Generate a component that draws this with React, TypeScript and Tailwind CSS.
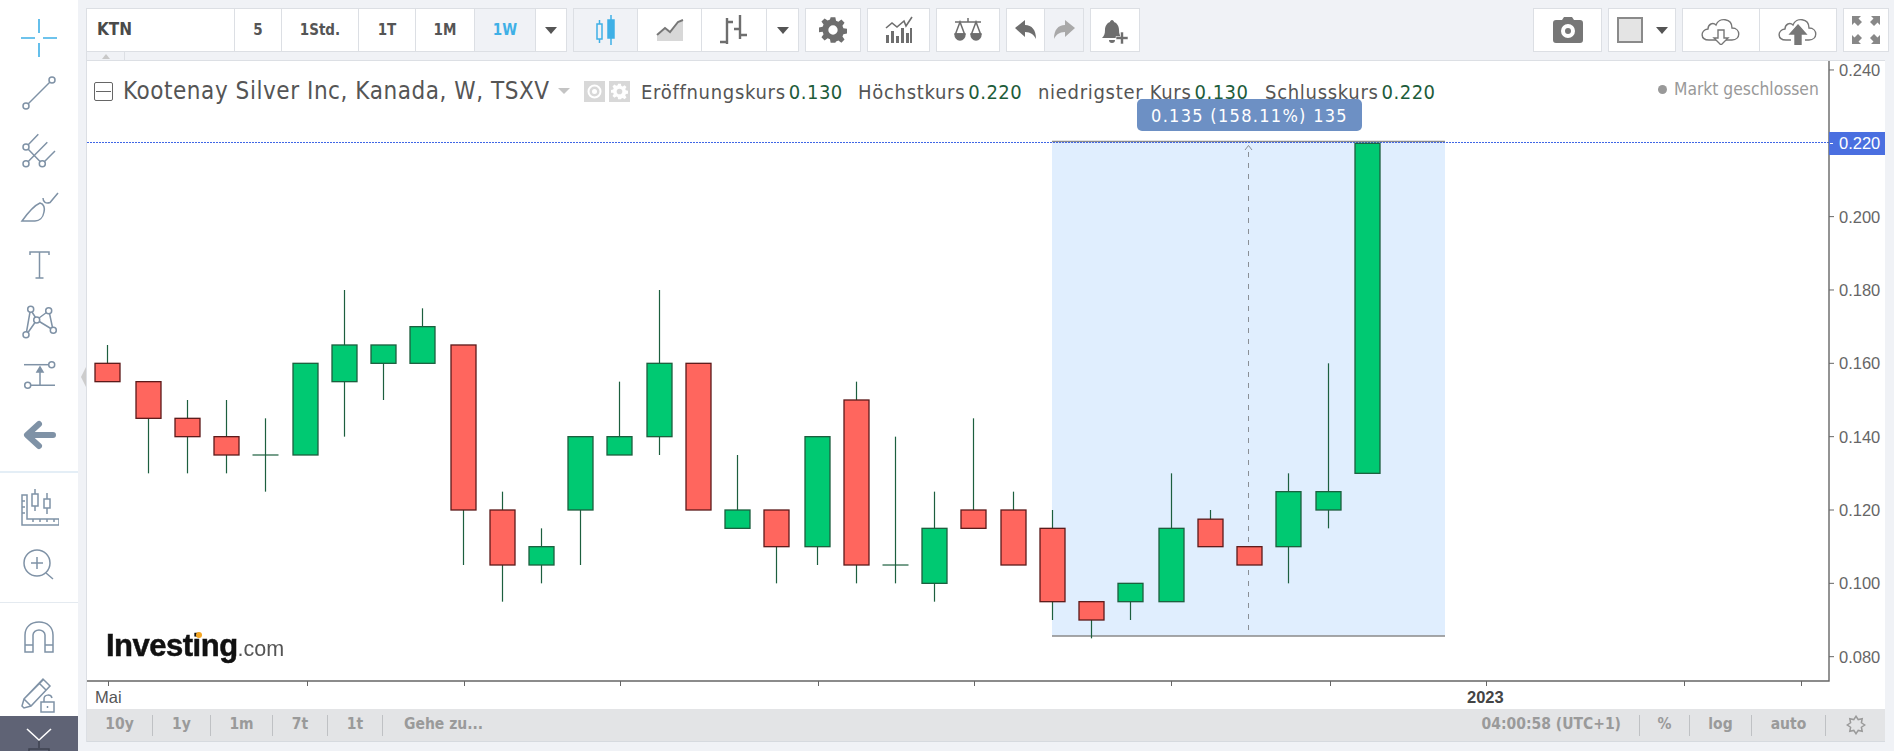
import type { ReactNode } from 'react';

const condensed = "font-['DejaVu_Sans_Condensed','DejaVu_Sans',sans-serif]";
const arial = "font-['Liberation_Sans',Arial,sans-serif]";

type Candle = [number, 'r' | 'g', number, number, number, number];

// x, colour, wick high, body top, body bottom, wick low
const candles: Candle[] = [
  [107, 'r', 0.165, 0.16, 0.155, 0.155],
  [148, 'r', 0.155, 0.155, 0.145, 0.13],
  [187, 'r', 0.15, 0.145, 0.14, 0.13],
  [226, 'r', 0.15, 0.14, 0.135, 0.13],
  [265, 'g', 0.145, 0.135, 0.135, 0.125],
  [305, 'g', 0.16, 0.16, 0.135, 0.135],
  [344, 'g', 0.18, 0.165, 0.155, 0.14],
  [383, 'g', 0.165, 0.165, 0.16, 0.15],
  [422, 'g', 0.175, 0.17, 0.16, 0.16],
  [463, 'r', 0.165, 0.165, 0.12, 0.105],
  [502, 'r', 0.125, 0.12, 0.105, 0.095],
  [541, 'g', 0.115, 0.11, 0.105, 0.1],
  [580, 'g', 0.14, 0.14, 0.12, 0.105],
  [619, 'g', 0.155, 0.14, 0.135, 0.135],
  [659, 'g', 0.18, 0.16, 0.14, 0.135],
  [698, 'r', 0.16, 0.16, 0.12, 0.12],
  [737, 'g', 0.135, 0.12, 0.115, 0.115],
  [776, 'r', 0.12, 0.12, 0.11, 0.1],
  [817, 'g', 0.14, 0.14, 0.11, 0.105],
  [856, 'r', 0.155, 0.15, 0.105, 0.1],
  [895, 'g', 0.14, 0.105, 0.105, 0.1],
  [934, 'g', 0.125, 0.115, 0.1, 0.095],
  [973, 'r', 0.145, 0.12, 0.115, 0.115],
  [1013, 'r', 0.125, 0.12, 0.105, 0.105],
  [1052, 'r', 0.12, 0.115, 0.095, 0.09],
  [1091, 'r', 0.095, 0.095, 0.09, 0.085],
  [1130, 'g', 0.1, 0.1, 0.095, 0.09],
  [1171, 'g', 0.13, 0.115, 0.095, 0.095],
  [1210, 'r', 0.12, 0.1175, 0.11, 0.11],
  [1249, 'r', 0.11, 0.11, 0.105, 0.105],
  [1288, 'g', 0.13, 0.125, 0.11, 0.1],
  [1328, 'g', 0.16, 0.125, 0.12, 0.115],
  [1367, 'g', 0.22, 0.22, 0.13, 0.13],
];

const yOf = (p: number) => 143.3 + (0.22 - p) * 3667;

const axisLabels = ['0.240', '0.200', '0.180', '0.160', '0.140', '0.120', '0.100', '0.080'];
const timeTicks = [108, 307, 464, 620, 818, 974, 1171, 1330, 1486, 1684, 1801];

// 8 pointed star for the settings button in the bottom bar
const starPoints = Array.from({ length: 16 }, (_, i) => {
  const r = i % 2 === 0 ? 10.5 : 7;
  const a = (i * Math.PI) / 8;
  return `${(12 + r * Math.sin(a)).toFixed(2)},${(12 - r * Math.cos(a)).toFixed(2)}`;
}).join(' ');

function Icon({ size = 40, children }: { size?: number; children: ReactNode }) {
  return (
    <svg width={size} height={size} viewBox="0 0 40 40" fill="none" stroke="#7f92a6" strokeWidth="1.5">
      {children}
    </svg>
  );
}

function Sidebar() {
  return (
    <div className="w-[78px] h-full bg-white flex flex-col items-center relative shrink-0">
      <div className="mt-[18px]">
        <Icon>
          <path d="M20 1v14M20 25v14M2 20h14M24 20h14" stroke="#3fb0e6" strokeWidth="1.6" />
        </Icon>
      </div>
      <div className="mt-[15px]">
        <Icon>
          <circle cx="33" cy="7" r="3" />
          <circle cx="7" cy="33" r="3" />
          <path d="M31 9L9 31" />
        </Icon>
      </div>
      <div className="mt-[18px]">
        <Icon>
          <circle cx="7" cy="16" r="3" />
          <circle cx="7" cy="32.700" r="3" />
          <circle cx="23.300" cy="32.700" r="3" />
          <path d="M9 14L19.300 3.300M9 30.700L28.300 11.300M25.300 30.700L36 20M9 18l12.300 12.700" />
        </Icon>
      </div>
      <div className="mt-[18px]">
        <Icon>
          <path d="M3 32c5-7 11-15 18-18 4 1 5 5 4 9-1 6-5 9-9 9z" />
          <path d="M24 9c0 4 3 6 7 4.500l8-9.500" />
        </Icon>
      </div>
      <div className="mt-[16px]">
        <Icon>
          <path d="M11 10V7h19v3M20.500 7v26M16.500 33h8" />
        </Icon>
      </div>
      <div className="mt-[17px]">
        <Icon>
          <circle cx="11.700" cy="7.300" r="3" />
          <circle cx="29.700" cy="8.700" r="3" />
          <circle cx="17.700" cy="18" r="3" />
          <circle cx="34.300" cy="28.300" r="3" />
          <circle cx="7" cy="32.700" r="3" />
          <path d="M11 10L7.500 30M13 10l3.500 5.500M9 30.500l7-10M20.300 19.500l11.500 7M27.500 10.500l-7.500 5.500M30.500 11.500l3 14" />
        </Icon>
      </div>
      <div className="mt-[13px]">
        <Icon>
          <path d="M5 9.700h24.500" />
          <circle cx="32.700" cy="9.700" r="3" />
          <circle cx="8.700" cy="30.300" r="3" />
          <path d="M11.700 30.300H36M21 30V16" />
          <path d="M18 17l3-5 3 5z" fill="#7f92a6" />
        </Icon>
      </div>
      <div className="mt-[20px]">
        <Icon>
          <path d="M34 20H12M20 9L8 20l12 11" strokeWidth="6" strokeLinecap="round" strokeLinejoin="round" />
        </Icon>
      </div>
      <div className="w-full h-[2px] bg-[#e4eef6] mt-[16px]" />
      <div className="mt-[16px]">
        <Icon>
          <path d="M3 6h5v24h32v6H3zM3 12h3M3 18h3M3 24h3M14 30v3M21 30v3M28 30v3M35 30v3" />
          <rect x="13" y="5" width="6" height="12" />
          <path d="M16 0v5M16 17v5M28 4v6M28 19v6" />
          <rect x="25" y="10" width="6" height="9" />
        </Icon>
      </div>
      <div className="mt-[16px]">
        <Icon>
          <circle cx="18" cy="18" r="13" />
          <path d="M27 28l7 6M12 18h12M18 12v12" />
        </Icon>
      </div>
      <div className="w-full h-px bg-[#e4eaf0] mt-[17px]" />
      <div className="mt-[15px]">
        <Icon>
          <path d="M6 34V17c0-8 6-13 14-13s14 5 14 13v17h-8V17c0-3-3-5-6-5s-6 2-6 5v17zM6 27h8M26 27h8" />
        </Icon>
      </div>
      <div className="mt-[17px]">
        <Icon>
          <path d="M3 31l2-7L24 4l7 7-19 20-7 2zM20 8l7 7M5 24l7 7M7 22L24 5" />
          <rect x="22" y="27" width="13" height="10" />
          <path d="M25 27v-3c0-5 7-5 8-1" />
          <path d="M28.500 31v2" />
        </Icon>
      </div>
      <div className="absolute left-0 right-0 bottom-0 h-[35px] bg-[#5f6375] flex justify-center overflow-hidden">
        <svg width="30" height="35" viewBox="0 0 30 35" fill="none">
          <path d="M15 22v10M5 35v-2h20v2" stroke="#3f4350" strokeWidth="1.5" />
          <path d="M3 13l12 11 12-11" stroke="#ffffff" strokeWidth="1.6" />
        </svg>
      </div>
    </div>
  );
}

function Cell({ w, active, children, last }: { w: string; active?: boolean; children: ReactNode; last?: boolean }) {
  return (
    <div
      className={`${w} h-full flex items-center justify-center shrink-0 ${last ? '' : 'border-r border-[#dcdfe4]'} ${
        active ? 'bg-[#f0f2f6]' : ''
      }`}
    >
      {children}
    </div>
  );
}

function Group({ children }: { children: ReactNode }) {
  return <div className="h-full flex bg-white border border-[#dcdfe4] shrink-0">{children}</div>;
}

function Caret({ color = '#555555' }: { color?: string }) {
  return (
    <svg width="12" height="7" viewBox="0 0 12 7">
      <path d="M0 0h12L6 7z" fill={color} />
    </svg>
  );
}

function Label({ children }: { children: ReactNode }) {
  return <span className="text-[15px] font-bold text-[#555555]">{children}</span>;
}

function Toolbar() {
  return (
    <div className={`h-[44px] mt-[8px] flex gap-[6px] pr-[5px] ${condensed}`}>
      <Group>
        <div className="w-[148px] h-full flex items-center pl-[10px] border-r border-[#dcdfe4] text-[17px] font-bold text-[#4a4a4a]">
          KTN
        </div>
        <Cell w="w-[47px]"><Label>5</Label></Cell>
        <Cell w="w-[77px]"><Label>1Std.</Label></Cell>
        <Cell w="w-[57px]"><Label>1T</Label></Cell>
        <Cell w="w-[59px]"><Label>1M</Label></Cell>
        <Cell w="w-[61px]" active>
          <span className="text-[15px] font-bold text-[#3fb0e6]">1W</span>
        </Cell>
        <Cell w="w-[30px]" last><Caret /></Cell>
      </Group>
      <Group>
        <Cell w="w-[64px]" active>
          <svg width="22" height="32" viewBox="0 0 22 32" fill="none" stroke="#3fb0e6" strokeWidth="1.5">
            <rect x="2" y="10" width="5" height="15" />
            <path d="M4.500 6v4M4.500 25v4M16 1v7M16 24v7" />
            <rect x="13" y="6" width="6" height="18" fill="#3fb0e6" />
          </svg>
        </Cell>
        <Cell w="w-[64px]">
          <svg width="28" height="24" viewBox="0 0 28 24">
            <path d="M1 18l8-7 5 4 8-10 5-2v20H1z" fill="#d8d8d8" />
            <path d="M1 17l8-7 5 4 8-10 5-2" fill="none" stroke="#777777" strokeWidth="2" />
          </svg>
        </Cell>
        <Cell w="w-[65px]">
          <svg width="28" height="32" viewBox="0 0 28 32" fill="none" stroke="#6e6e6e" strokeWidth="2.400">
            <path d="M7 4v26M7 8h6M0 28h7M20 1v24M20 21h7M14 15h6" />
          </svg>
        </Cell>
        <Cell w="w-[31px]" last><Caret /></Cell>
      </Group>
      <Group>
        <div className="w-[54px] h-full flex items-center justify-center">
          <svg width="28" height="28" viewBox="0 0 24 24" fill="#6e6e6e">
            <path
              fillRule="evenodd"
              d="M10 1h4l.6 3.100 2 .8 2.600-1.800 2.700 2.700-1.800 2.600.8 2 3.100.6v4l-3.100.6-.8 2 1.800 2.600-2.700 2.700-2.600-1.800-2 .8L14 23h-4l-.6-3.100-2-.8-2.600 1.800-2.700-2.700 1.800-2.600-.8-2L0 13.900v-4l3.100-.6.8-2L2.100 4.800 4.800 2.100l2.600 1.800 2-.8zM12 8a4 4 0 100 8 4 4 0 000-8z"
            />
          </svg>
        </div>
      </Group>
      <Group>
        <div className="w-[61px] h-full flex items-center justify-center">
          <svg width="28" height="28" viewBox="0 0 28 28" fill="#6e6e6e">
            <path d="M1 19h3v8H1zM6 15h3v12H6zM11 20h3v7h-3zM16 12h3v15h-3zM21 17h3v10h-3zM25 12h2v15h-2z" />
            <path d="M1 12l6-5 5 4 7-6 2 5 6-9" fill="none" stroke="#6e6e6e" strokeWidth="1.600" />
          </svg>
        </div>
      </Group>
      <Group>
        <div className="w-[62px] h-full flex items-center justify-center">
          <svg width="28" height="26" viewBox="0 0 28 26" fill="none" stroke="#6e6e6e" strokeWidth="1.500">
            <path d="M1 5h26M14 1v4" />
            <path d="M6 5L1.500 17h9zM22 5l-4.500 12h9z" />
            <path d="M1 17h10a5 6 0 01-10 0zM17 17h10a5 6 0 01-10 0z" fill="#6e6e6e" />
          </svg>
        </div>
      </Group>
      <Group>
        <Cell w="w-[38px]">
          <svg width="22" height="20" viewBox="0 0 22 20">
            <path d="M0 8l10-8v5c7 0 11 5 11 14-2-4-5-7-11-7v5z" fill="#6e6e6e" />
          </svg>
        </Cell>
        <Cell w="w-[38px]" active last>
          <svg width="22" height="20" viewBox="0 0 22 20">
            <path d="M22 8L12 0v5C5 5 1 10 1 19c2-4 5-7 11-7v5z" fill="#a9a9a9" />
          </svg>
        </Cell>
      </Group>
      <Group>
        <div className="w-[48px] h-full flex items-center justify-center">
          <svg width="28" height="28" viewBox="0 0 28 28" fill="#6e6e6e">
            <path d="M11 4c1 0 2 1 2 2 3 1 5 4 5 8 0 4 1 6 3 8H1c2-2 3-4 3-8 0-4 2-7 5-8 0-1 1-2 2-2zM8 24h6a3 3 0 01-6 0z" />
            <path d="M19.500 16h3v4.500h4.500v3h-4.500V28h-3v-4.500H15v-3h4.500z" stroke="#ffffff" strokeWidth="0.600" />
          </svg>
        </div>
      </Group>
      <div className="flex-1" />
      <Group>
        <div className="w-[67px] h-full flex items-center justify-center">
          <svg width="30" height="26" viewBox="0 0 30 26" fill="#777777">
            <path
              fillRule="evenodd"
              d="M9 3l2-3h8l2 3h6c2 0 3 1 3 3v17c0 2-1 3-3 3H3c-2 0-3-1-3-3V6c0-2 1-3 3-3zM15 7a7 7 0 100 14 7 7 0 000-14zM15 11a3 3 0 110 6 3 3 0 010-6z"
            />
          </svg>
        </div>
      </Group>
      <Group>
        <div className="w-[66px] h-full flex items-center pl-[8px] gap-[13px]">
          <div className="w-[26px] h-[26px] bg-[#e4e4e4] border-2 border-[#8a8a8a]" />
          <Caret />
        </div>
      </Group>
      <Group>
        <Cell w="w-[77px]">
          <svg width="40" height="30" viewBox="0 0 40 30" fill="none" stroke="#777777" strokeWidth="1.400">
            <path d="M15 25H8c-9 0-9-10-1-11 0-5 5-7 8-4 3-8 16-7 16 3 9 0 9 12 0 12h-6" />
            <path d="M17 15h6v8h4l-7 7-7-7h4z" />
          </svg>
        </Cell>
        <Cell w="w-[76px]" last>
          <svg width="40" height="30" viewBox="0 0 40 30" fill="none" stroke="#777777" strokeWidth="1.400">
            <path d="M13 25H8c-9 0-9-10-1-11 0-5 5-7 8-4 3-8 16-7 16 3 9 0 9 12 0 12h-4" />
            <path d="M20 10l8 9h-5v11h-6V19h-5z" fill="#777777" />
          </svg>
        </Cell>
      </Group>
      <Group>
        <div className="w-[44px] h-full flex items-center justify-center">
          <svg width="28" height="28" viewBox="0 0 28 28" fill="#888888">
            <path d="M0 0h9L6.500 2.500 10 6 6 10 2.500 6.500 0 9zM28 0v9l-2.500-2.500L22 10l-4-4 3.500-3.500L19 0zM0 28v-9l2.500 2.500L6 18l4 4-3.500 3.500L9 28zM28 28h-9l2.500-2.500L18 22l4-4 3.500 3.500L28 19z" />
          </svg>
        </div>
      </Group>
    </div>
  );
}

function Chart() {
  return (
    <svg className="absolute inset-0 w-full h-full" viewBox="87 61 1798 648">
      <rect x="1052" y="143" width="393" height="493" fill="#e0eefe" />
      <path d="M1052 141.500h393M1052 636h393" stroke="#8a8a8a" strokeWidth="1.400" />
      <path d="M1248.500 152V636" stroke="#8a8f96" strokeWidth="1" strokeDasharray="5 6" />
      <path d="M1245 150l3.500-4.500 3.500 4.500" fill="none" stroke="#8a8f96" strokeWidth="1" />
      <path d="M87 142.500H1829" stroke="#3f66e6" strokeWidth="1" strokeDasharray="2 1" />
      {candles.map(([x, c, hi, top, bot, lo]) => {
        const edge = c === 'r' ? '#5c1a1a' : '#1c5f3e';
        const fill = c === 'r' ? '#ff665e' : '#00c972';
        const yTop = yOf(top);
        const yBot = yOf(bot);
        return (
          <g key={x}>
            <path d={`M${x + 0.5} ${yOf(hi)}V${yOf(lo)}`} stroke="#1c5f3e" strokeWidth="1.200" />
            {yTop === yBot ? (
              <path d={`M${x - 12.5} ${yTop}h26`} stroke="#1c5f3e" strokeWidth="1.200" />
            ) : (
              <rect x={x - 12} y={yTop} width="25" height={yBot - yTop} fill={fill} stroke={edge} strokeWidth="1.300" />
            )}
          </g>
        );
      })}
      <path d="M87 681H1829V61" fill="none" stroke="#666666" strokeWidth="1.400" />
      {timeTicks.map((x) => (
        <path key={x} d={`M${x + 0.5} 681v5`} stroke="#666666" strokeWidth="1" />
      ))}
      {axisLabels.map((t) => {
        const y = yOf(parseFloat(t));
        return (
          <g key={t}>
            <path d={`M1829 ${y}h5`} stroke="#666666" strokeWidth="1" />
            <text x="1839" y={y + 6} fontSize="16.500" fill="#666666" fontFamily="Liberation Sans, Arial, sans-serif">
              {t}
            </text>
          </g>
        );
      })}
      <text x="95" y="703" fontSize="16.500" fill="#555555" fontFamily="Liberation Sans, Arial, sans-serif">
        Mai
      </text>
      <text x="1467" y="703" fontSize="16.500" fontWeight="700" fill="#444444" fontFamily="Liberation Sans, Arial, sans-serif">
        2023
      </text>
    </svg>
  );
}

function Legend() {
  const rows: [string, string, string][] = [
    ['Eröffnungskurs', '0.130', 'left-[554px]'],
    ['Höchstkurs', '0.220', 'left-[771px]'],
    ['niedrigster Kurs', '0.130', 'left-[951px]'],
    ['Schlusskurs', '0.220', 'left-[1178px]'],
  ];
  return (
    <>
      <div className={`absolute left-[7px] top-[18px] flex items-center text-[#555555] ${condensed}`}>
        <div className="w-[19px] h-[19px] border border-[#666666] rounded-[2px] flex items-center justify-center">
          <div className="w-[15px] h-px bg-[#666666]" />
        </div>
        <span className="ml-[10px] text-[24px] leading-[24px] tracking-[0.55px] whitespace-nowrap">
          Kootenay Silver Inc, Kanada, W, TSXV
        </span>
        <svg className="ml-[8px]" width="12" height="6" viewBox="0 0 12 6">
          <path d="M0 0h12L6 6z" fill="#c4c4c4" />
        </svg>
        <div className="ml-[14px] w-[21px] h-[21px] bg-[#d8d8d8] flex items-center justify-center">
          <svg width="15" height="15" viewBox="0 0 15 15" fill="none" stroke="#ffffff" strokeWidth="2">
            <circle cx="7.500" cy="7.500" r="6" />
            <circle cx="7.500" cy="7.500" r="1.500" fill="#ffffff" />
          </svg>
        </div>
        <div className="ml-[4px] w-[21px] h-[21px] bg-[#d8d8d8] flex items-center justify-center">
          <svg width="17" height="17" viewBox="0 0 24 24" fill="#ffffff">
            <path
              fillRule="evenodd"
              d="M10 1h4l.6 3.100 2 .8 2.600-1.800 2.700 2.700-1.800 2.600.8 2 3.100.6v4l-3.100.6-.8 2 1.800 2.600-2.700 2.700-2.600-1.800-2 .8L14 23h-4l-.6-3.100-2-.8-2.600 1.800-2.700-2.700 1.800-2.600-.8-2L0 13.900v-4l3.100-.6.8-2L2.100 4.800 4.800 2.100l2.600 1.800 2-.8zM12 8a4 4 0 100 8 4 4 0 000-8z"
            />
          </svg>
        </div>
      </div>
      {rows.map(([label, value, left]) => (
        <div key={label} className={`absolute top-[19px] ${left} flex gap-[3px] text-[20px] leading-[24px] whitespace-nowrap ${condensed}`}>
          <span className="text-[#555555] tracking-[0.7px]">{label}</span>
          <span className="text-[#1d5c3a] tracking-[0.5px]">{value}</span>
        </div>
      ))}
      <div className={`absolute top-[16px] left-[1571px] flex items-center gap-[7px] text-[17.300px] leading-[24px] text-[#999999] whitespace-nowrap ${condensed}`}>
        <div className="w-[9px] h-[9px] rounded-full bg-[#999999]" />
        Markt geschlossen
      </div>
      <div className={`absolute left-[1050px] top-[38px] w-[225px] h-[32px] rounded-[5px] bg-[#6d90c4] flex items-center justify-center text-white text-[18px] tracking-[1.300px] ${condensed}`}>
        0.135 (158.11%) 135
      </div>
      <div className="absolute left-[1742px] top-[71px] w-[56px] h-[23px] bg-[#4a6fe0] flex items-center pl-[1px]">
        <div className="w-[3px] h-px bg-white" />
        <span className={`ml-[6px] text-white text-[16.500px] ${arial}`}>0.220</span>
      </div>
      <div className={`absolute left-[19px] top-[569px] flex items-baseline text-[#111111] ${arial}`}>
        <span className="relative text-[31px] leading-[32px] font-bold tracking-[-0.5px] blur-[0.4px] [-webkit-text-stroke:0.5px_#111111]">
          Investing
          <span className="absolute left-[90px] top-[2px] w-[6px] h-[6px] rounded-full bg-[#f5a623]" />
        </span>
        <span className="text-[21.500px] leading-[32px] text-[#555555] blur-[0.3px]">.com</span>
      </div>
    </>
  );
}

function BottomBar() {
  const left: [string, string][] = [
    ['10y', 'w-[66px]'],
    ['1y', 'w-[58px]'],
    ['1m', 'w-[62px]'],
    ['7t', 'w-[55px]'],
    ['1t', 'w-[55px]'],
  ];
  const right: [string, string][] = [
    ['%', 'w-[50px]'],
    ['log', 'w-[62px]'],
    ['auto', 'w-[74px]'],
  ];
  return (
    <div className={`h-[33px] bg-[#e3e4e6] border-b border-[#d6dadf] flex items-center text-[15.500px] font-bold text-[#9a9a9a] ${condensed}`}>
      {left.map(([t, w]) => (
        <div key={t} className={`${w} h-[21px] flex items-center justify-center border-r border-[#bfc1c4]`}>
          {t}
        </div>
      ))}
      <span className="ml-[21px]">Gehe zu...</span>
      <div className="flex-1" />
      <span className="pr-[18px]">04:00:58 (UTC+1)</span>
      {right.map(([t, w]) => (
        <div key={t} className={`${w} h-[21px] flex items-center justify-center border-l border-[#bfc1c4]`}>
          {t}
        </div>
      ))}
      <div className="w-[60px] h-[21px] flex items-center justify-center border-l border-[#bfc1c4]">
        <svg width="20" height="20" viewBox="0 0 24 24" fill="none" stroke="#9a9a9a" strokeWidth="1.800">
          <polygon points={starPoints} />
        </svg>
      </div>
    </div>
  );
}

export default function App() {
  return (
    <div className="w-[1894px] h-[751px] bg-[#f0f2f6] flex overflow-hidden relative">
      <Sidebar />
      <div className="flex-1 pl-[8px] flex flex-col min-w-0">
        <Toolbar />
        <div className="h-[8px] shrink-0 flex">
          <div className="w-[39px] h-full border-l border-r border-[#dcdfe4] flex items-center justify-center">
            <svg width="8" height="5" viewBox="0 0 8 5">
              <path d="M0 5h8L4 0z" fill="#c8c8c8" />
            </svg>
          </div>
        </div>
        <div className="w-[1799px] h-[682px] flex flex-col border-l border-t border-[#dcdfe4] bg-white">
          <div className="h-[648px] relative">
            <Chart />
            <Legend />
          </div>
          <BottomBar />
        </div>
      </div>
      <svg className="absolute left-[81px] top-[367px]" width="5" height="20" viewBox="0 0 5 20">
        <path d="M5 0v20L0 10z" fill="#cccccc" />
      </svg>
    </div>
  );
}
